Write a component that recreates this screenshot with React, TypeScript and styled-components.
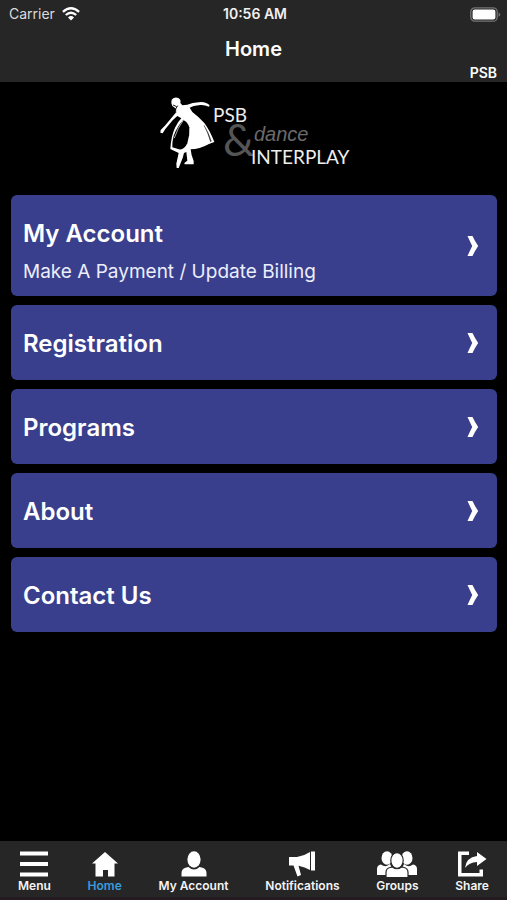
import React from "react";
import styled, { createGlobalStyle } from "styled-components";

const GlobalStyle = createGlobalStyle`
  * { box-sizing: border-box; }
  body {
    margin: 0;
    background: #000;
    color: #fff;
    font-family: Inter, "Liberation Sans", sans-serif;
  }
`;

const Screen = styled.div`
  min-height: 100vh;
  display: flex;
  flex-direction: column;
  background: #000;
`;

const Header = styled.header`
  background: #262626;
`;

const StatusBar = styled.div`
  display: grid;
  grid-template-columns: 1fr auto 1fr;
  align-items: center;
  height: 28px;
  padding: 0 6px 0 9px;
  font-size: 14px;
  line-height: 16px;
`;

const Carrier = styled.div`
  display: flex;
  align-items: center;
  gap: 7px;
  color: #dcdcdc;
`;

const Clock = styled.div`
  font-weight: 600;
  color: #f0f0f0;
`;

const BatteryIcon = styled.svg`
  justify-self: end;
`;

const Title = styled.h1`
  margin: 0;
  padding-top: 9px;
  font-size: 20px;
  line-height: 24px;
  font-weight: 600;
  text-align: center;
`;

const OrgName = styled.div`
  padding: 4px 10px 1px;
  font-size: 14px;
  line-height: 16px;
  font-weight: 600;
  text-align: right;
`;

const Main = styled.main`
  flex: 1;
`;

const LogoArea = styled.div`
  display: flex;
  justify-content: center;
  padding: 13px 0 23px;
`;

const CardList = styled.nav`
  display: flex;
  flex-direction: column;
  gap: 9px;
  padding: 0 10px 0 11px;
`;

const Card = styled.a`
  display: flex;
  align-items: center;
  justify-content: space-between;
  padding: 0 18px 0 12px;
  border-radius: 6px;
  background: #393f8d;
  color: #fff;
  text-decoration: none;
`;

const CardBody = styled.div<{ $detailed?: boolean }>`
  padding: 24px 0 ${(p) => (p.$detailed ? "12px" : "21px")};
`;

const CardTitle = styled.div`
  font-size: 24px;
  line-height: 30px;
  font-weight: 600;
`;

const CardText = styled.div`
  margin-top: 11px;
  font-size: 19px;
  line-height: 24px;
  color: #eceefb;
`;

const TabBar = styled.nav`
  display: flex;
  justify-content: space-between;
  padding: 9px 18px 4px;
  border-bottom: 3px solid #231b1f;
  background: #262626;
`;

const Tab = styled.a<{ $active?: boolean }>`
  display: flex;
  flex-direction: column;
  align-items: center;
  color: ${(p) => (p.$active ? "#3a9bdc" : "#f4f4f4")};
  font-size: 12px;
  line-height: 15px;
  font-weight: 600;
  text-decoration: none;
  white-space: nowrap;

  svg { fill: #fff; }
`;

const Wifi = () => (
  <svg width="18" height="14" viewBox="0 0 18 14" fill="none" stroke="#fff" strokeWidth="2.3" aria-hidden="true">
    <path d="M.9 4.9Q9-2.4 17.1 4.9" />
    <path d="M3.8 8Q9 3.4 14.2 8" />
    <path d="M6 10.4Q9 7.6 12 10.4L9 13.6Z" fill="#fff" stroke="none" />
  </svg>
);

const Battery = () => (
  <BatteryIcon width="31" height="15" viewBox="0 0 31 15" aria-hidden="true">
    <rect x=".8" y=".8" width="26.4" height="13.4" rx="4" fill="#262626" stroke="#747474" strokeWidth="1.3" />
    <rect x="2.6" y="2.6" width="22.8" height="9.8" rx="2.2" fill="#fff" />
    <path d="M28.6 5.2Q32 7.5 28.6 9.8Z" fill="#747474" />
  </BatteryIcon>
);

const Chevron = () => (
  <svg width="12" height="22" viewBox="0 0 12 22" fill="#fff" aria-hidden="true">
    <path d="M.5 1H5.500Q8 6.500 11.200 11Q8 15.500 5.500 21H.5Q3 15.500 5.200 11Q3 6.500 .5 1Z" />
  </svg>
);

const Logo = () => (
  <svg width="190" height="77" viewBox="0 0 190 77" overflow="visible" role="img" aria-label="PSB and dance Interplay">
    <g transform="scale(.3333) translate(-24 -21)" fill="#fff">
      <path d="M62 35Q70 26 82 30Q91 35 88 45L94 52L109 50L125 45L150 42Q168 43 176 52L174 56Q160 50 148 51L128 54L116 59L124 72Q145 88 160 105Q177 128 190 162L174 168Q145 184 119 184Q120 200 128 219V229H101L100 225L109 218L106 192L99 195L95 210L83 240H77L76 227L83 195L58 183Q60 145 72 119Q80 102 91 91L79 84L65 97L43 123L35 136L28 134L29 126L43 112L63 88L73 76L75 62L64 54Q59 46 62 35Z" />
      <path d="M97 96Q77 117 68 144Q63 162 64 178L84 184Q99 187 109 166Q117 141 115 118Q110 102 97 96Z" fill="#000" />
      <path d="M158 112Q170 134 178 162L182 160Q174 134 160 112Z" fill="#444" />
      <path d="M80 53Q71 62 74 75M66 51L77 56" fill="none" stroke="#111" strokeWidth="3" />
      <path d="M98 95Q80 119 70 150" fill="none" stroke="#aaa" strokeWidth="3" />
    </g>
    <text x="64" y="61" fontFamily="Lato, sans-serif" fontSize="44" fill="#555">&amp;</text>
    <text x="95" y="46" fontFamily="'Liberation Sans', sans-serif" fontStyle="italic" fontSize="20" fill="#6b6b6b">dance</text>
    <text x="54" y="27" fontFamily="Lato, sans-serif" fontSize="19" fill="#eee">PSB</text>
    <text x="92" y="69" fontFamily="Lato, sans-serif" fontSize="19" fill="#eee">INTERPLAY</text>
  </svg>
);

const MenuIcon = () => (
  <svg width="30" height="28" viewBox="0 0 30 28" aria-hidden="true">
    <path d="M1 1.500H29V5.500H1ZM1 12H29V16H1ZM1 22.500H29V26.500H1Z" />
  </svg>
);

const HomeIcon = () => (
  <svg width="26" height="28" viewBox="0 0 26 28" aria-hidden="true">
    <path d="M13 2L26 13.500H22.500V26.500H16V20H11V26.500H3.500V13.500H0Z" />
  </svg>
);

const PersonIcon = () => (
  <svg width="26" height="28" viewBox="0 0 26 28" aria-hidden="true">
    <ellipse cx="13" cy="9.500" rx="6.600" ry="8.200" />
    <path d="M.5 26.500V23Q.5 19 4.500 17.800L7.500 17Q13 22 18.500 17L21.500 17.800Q25.500 19 25.500 23V26.500Z" />
  </svg>
);

const MegaphoneIcon = () => (
  <svg width="28" height="28" viewBox="0 0 28 28" aria-hidden="true">
    <path d="M1 7H9Q16 6 22 2V20Q17 17 10.500 15.800L13 25L9.500 26.500L5.500 15.500H1Z" />
    <path d="M23 1.500H27V20.500H23Z" />
  </svg>
);

const GroupIcon = () => (
  <svg width="40" height="28" viewBox="0 0 40 28" aria-hidden="true">
    <ellipse cx="10" cy="8" rx="5.500" ry="6.800" />
    <ellipse cx="30" cy="8" rx="5.500" ry="6.800" />
    <path d="M0 25V19Q0 15 4 14.500Q9 18 13 14L18 25ZM40 25V19Q40 15 36 14.500Q31 18 27 14L22 25Z" />
    <g stroke="#262626" strokeWidth="1.200">
      <ellipse cx="20" cy="10.500" rx="6.200" ry="7.800" />
      <path d="M9 27.500V22.500Q9 18.500 13 17.500L15.500 17Q20 20.500 24.500 17L27 17.500Q31 18.500 31 22.500V27.500Z" />
    </g>
  </svg>
);

const ShareIcon = () => (
  <svg width="30" height="28" viewBox="0 0 30 28" aria-hidden="true">
    <path d="M12 1.500H1V26.500H26V19.500H22.500V23H4.500V5H12Z" />
    <path d="M20 2L29.500 9L20 16V12Q12 12.500 8 18Q9 7.500 20 6Z" />
  </svg>
);

const cards = [
  { title: "My Account", text: "Make A Payment / Update Billing" },
  { title: "Registration" },
  { title: "Programs" },
  { title: "About" },
  { title: "Contact Us" },
];

const tabs = [
  { label: "Menu", Icon: MenuIcon },
  { label: "Home", Icon: HomeIcon, active: true },
  { label: "My Account", Icon: PersonIcon },
  { label: "Notifications", Icon: MegaphoneIcon },
  { label: "Groups", Icon: GroupIcon },
  { label: "Share", Icon: ShareIcon },
];

export default function App() {
  return (
    <>
      <GlobalStyle />
      <Screen>
        <Header>
          <StatusBar>
            <Carrier>
              Carrier
              <Wifi />
            </Carrier>
            <Clock>10:56 AM</Clock>
            <Battery />
          </StatusBar>
          <Title>Home</Title>
          <OrgName>PSB</OrgName>
        </Header>
        <Main>
          <LogoArea>
            <Logo />
          </LogoArea>
          <CardList aria-label="Sections">
            {cards.map((card) => (
              <Card key={card.title} href="#">
                <CardBody $detailed={Boolean(card.text)}>
                  <CardTitle>{card.title}</CardTitle>
                  {card.text && <CardText>{card.text}</CardText>}
                </CardBody>
                <Chevron />
              </Card>
            ))}
          </CardList>
        </Main>
        <TabBar aria-label="Main">
          {tabs.map(({ label, Icon, active }) => (
            <Tab key={label} href="#" $active={active} aria-current={active ? "page" : undefined}>
              <Icon />
              {label}
            </Tab>
          ))}
        </TabBar>
      </Screen>
    </>
  );
}
